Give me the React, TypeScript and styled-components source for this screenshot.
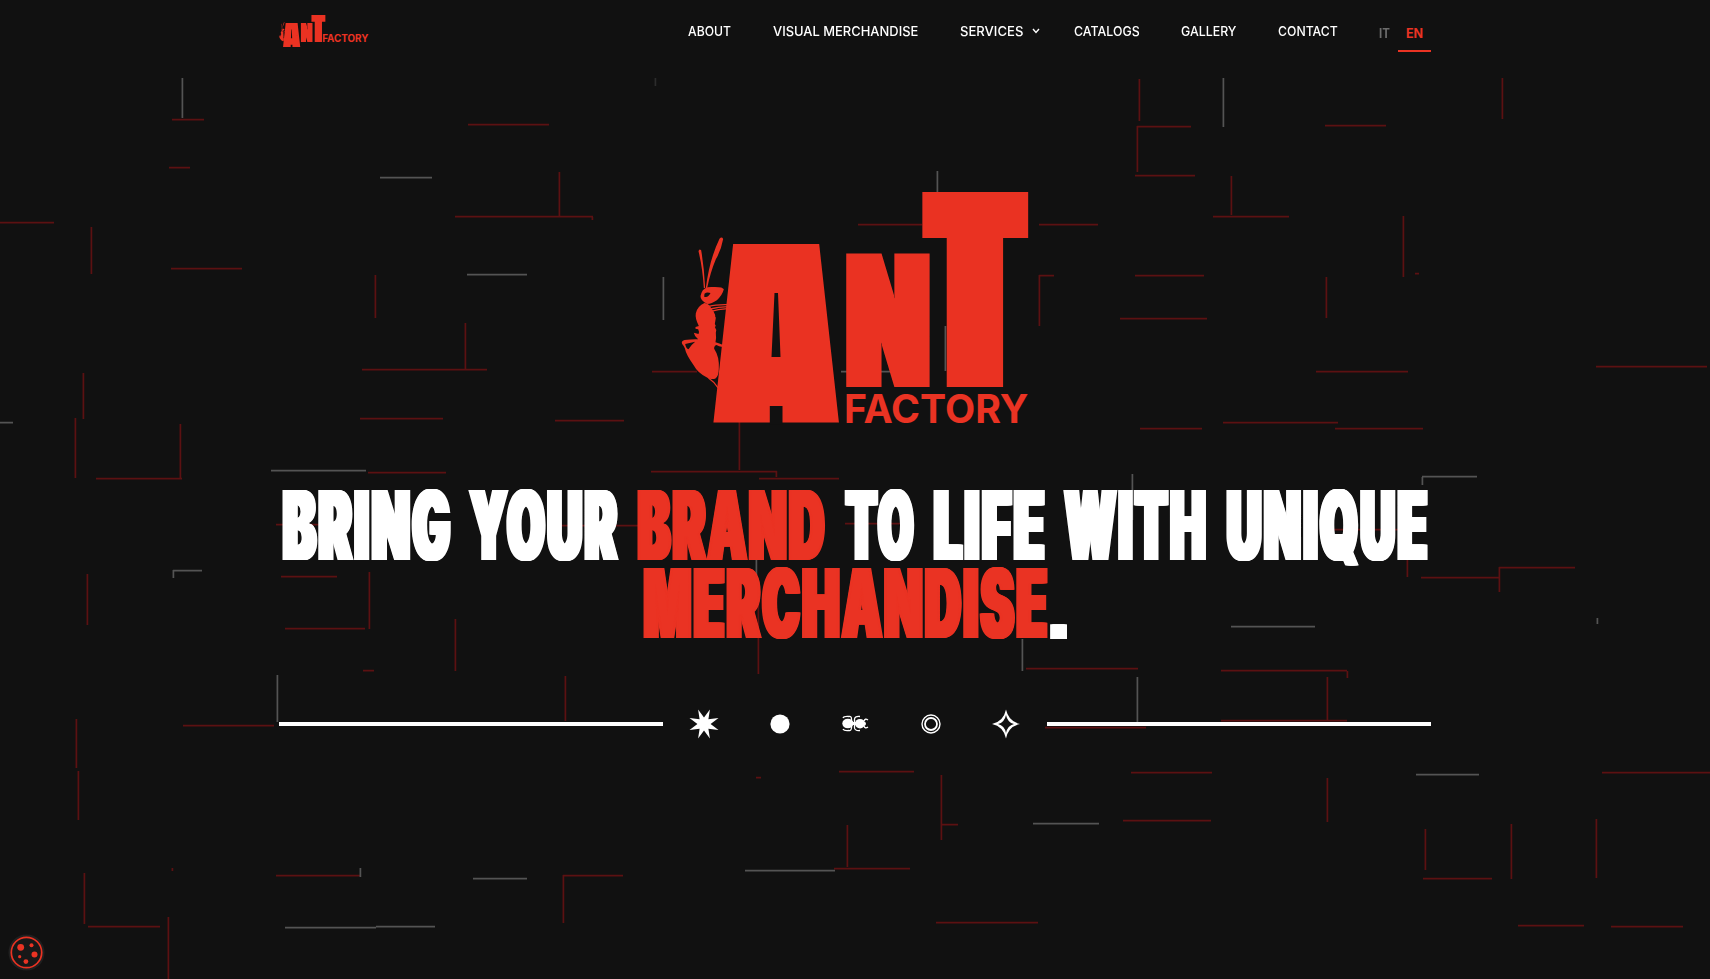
import React, { useLayoutEffect, useRef, useState } from "react";
import styled, { createGlobalStyle } from "styled-components";

const RED = "#ea3323";
const BG = "#111111";

const GlobalStyle = createGlobalStyle`
  *, *::before, *::after { box-sizing: border-box; }
  body { margin: 0; background: ${BG}; color: #fff; overflow: hidden; font-family: Inter, "Liberation Sans", sans-serif; }
  a { color: inherit; text-decoration: none; }
`;

const Page = styled.div`
  position: relative;
  height: 979px;
  overflow: hidden;
  background: ${BG};
`;

const Backdrop = styled.svg`
  position: absolute;
  inset: 0;
  width: 1710px;
  height: 979px;
`;

const Header = styled.header`
  position: relative;
  display: flex;
  justify-content: space-between;
  align-items: flex-start;
  width: 1152px;
  height: 78px;
  margin: 0 auto;
`;

const HomeLink = styled.a`
  display: block;
  padding-top: 16px;
  line-height: 0;
`;

const Nav = styled.nav`
  display: flex;
  align-items: flex-start;
  padding-top: 21px;
  font-size: 13.6px;
  font-weight: 500;
  line-height: 20px;
`;

const NavLink = styled.a<{ $gap: number }>`
  display: flex;
  align-items: center;
  margin-right: ${(p) => p.$gap}px;
`;

const Chevron = styled.svg`
  width: 8px;
  height: 6px;
  margin-left: 9px;
`;

const Languages = styled.div`
  display: flex;
  padding-top: 3px;
  font-size: 12.5px;
  font-weight: 700;
`;

const Language = styled.a<{ $active?: boolean }>`
  padding: 0 8px;
  height: 28px;
  color: ${(p) => (p.$active ? RED : "#6c6c6c")};
  border-bottom: 2px solid ${(p) => (p.$active ? RED : "transparent")};
`;

const FitBox = styled.span<{ $width: number }>`
  display: block;
  width: ${(p) => p.$width}px;
  white-space: nowrap;
`;

const FitText = styled.span`
  display: inline-block;
  transform-origin: 0 50%;
`;

const Hero = styled.main`
  position: relative;
  display: flex;
  flex-direction: column;
  align-items: center;
  width: 1152px;
  margin: 0 auto;
  padding-top: 114px;
`;

const HeroMark = styled.svg`
  display: block;
  width: 346px;
  height: 231px;
  overflow: visible;
`;

const SmallMark = styled.svg`
  width: 89px;
  height: 31px;
  overflow: visible;
`;

const Letter = styled.text`
  font-family: Roboto, "Liberation Sans", sans-serif;
  font-weight: 900;
  font-stretch: 75%;
  text-anchor: middle;
`;

const Wordmark = styled.text`
  font-family: Inter, "Liberation Sans", sans-serif;
  font-weight: 740;
`;

const Headline = styled.h1`
  margin: 62.5px 0 0 2px;
  font: 900 96px/78.7px Inter, "Liberation Sans", sans-serif;
  letter-spacing: 6px;
`;

const HeadlineRow = styled.span`
  display: flex;
  justify-content: center;
  height: 78.7px;
`;

const Word = styled.span<{ $accent?: boolean; $gap?: number }>`
  margin-left: ${(p) => p.$gap ?? 0}px;
  color: ${(p) => (p.$accent ? RED : "#fff")};
  text-shadow: 1.5px 0 0, -1.5px 0 0, 3px 0 0, -3px 0 0, 4.2px 0 0, -4.2px 0 0, 5.4px 0 0, -5.4px 0 0;
`;

const FullStop = styled.span`
  width: 18px;
  text-indent: -5px;
  font: 700 98px/82px "Liberation Sans", sans-serif;
  letter-spacing: 0;
  white-space: nowrap;
  text-shadow: 1.5px 0 0, -1.5px 0 0;
`;

const Divider = styled.div`
  display: flex;
  align-items: center;
  width: 1152px;
  height: 32px;
  margin-top: 65px;
`;

const Rule = styled.span`
  width: 384px;
  height: 4px;
  background: #fff;
`;

const Icons = styled.div`
  display: flex;
  flex: 1;
  justify-content: space-between;
  padding: 0 25px;
`;

const Icon = styled.svg`
  width: 32px;
  height: 32px;
`;

const CookieButton = styled.button`
  position: absolute;
  left: 8px;
  bottom: 8px;
  width: 37px;
  height: 37px;
  padding: 0;
  border: 0;
  background: none;
`;

function Fit({ width, children }: { width: number; children: React.ReactNode }) {
  const ref = useRef<HTMLSpanElement>(null);
  const [scale, setScale] = useState(1);
  useLayoutEffect(() => {
    if (ref.current) setScale(width / ref.current.offsetWidth);
  }, [width]);
  return (
    <FitBox $width={width}>
      <FitText ref={ref} style={{ transform: `scaleX(${scale})` }}>{children}</FitText>
    </FitBox>
  );
}

// Horizontal traces: x1, x2, y
const redH = [
  [172, 204, 119], [169, 190, 167], [468, 549, 124], [455, 593, 216], [0, 54, 222], [171, 242, 268],
  [362, 487, 369], [96, 182, 478], [360, 443, 418], [555, 624, 420], [368, 446, 472], [858, 922, 224],
  [1039, 1098, 224], [1039, 1054, 275], [652, 697, 371], [651, 777, 471], [759, 839, 478], [1137, 1191, 126],
  [1135, 1195, 175], [1135, 1204, 275], [1120, 1207, 318], [1325, 1386, 125], [1213, 1289, 216],
  [1415, 1419, 273], [1316, 1408, 371], [1596, 1707, 366], [1223, 1338, 422], [1335, 1423, 428],
  [1140, 1202, 428], [276, 320, 524], [560, 638, 525], [845, 900, 523], [1333, 1400, 529], [281, 337, 576],
  [1421, 1499, 577], [1499, 1575, 567], [285, 365, 628], [363, 374, 670], [183, 274, 725], [839, 914, 771],
  [834, 910, 868], [276, 360, 875], [563, 623, 875], [88, 160, 926], [756, 761, 777], [1026, 1138, 668],
  [1221, 1347, 670], [1221, 1347, 720], [1045, 1146, 727], [1131, 1212, 772], [1602, 1710, 772],
  [941, 958, 824], [1123, 1211, 820], [1423, 1492, 878], [936, 1038, 922], [1518, 1584, 925], [1611, 1683, 926],
];
const grayH = [
  [380, 432, 177], [467, 527, 274], [0, 13, 422], [271, 366, 470], [841, 892, 371], [1422, 1477, 476],
  [173, 202, 570], [473, 527, 878], [745, 835, 870], [285, 376, 927], [376, 435, 926], [1231, 1315, 626],
  [1416, 1479, 774], [1033, 1099, 823],
];
// Vertical traces: x, y1, y2
const redV = [
  [559, 172, 216], [592, 217, 220], [91, 227, 274], [375, 275, 318], [465, 323, 369], [83, 373, 419],
  [75, 418, 478], [180, 424, 478], [1039, 275, 326], [739, 422, 470], [776, 471, 477], [1139, 79, 121],
  [1137, 126, 172], [1502, 78, 119], [1231, 176, 215], [1403, 216, 277], [1326, 277, 318], [758, 600, 674],
  [1407, 555, 577], [369, 572, 629], [87, 574, 625], [455, 619, 671], [565, 676, 721], [76, 719, 768],
  [78, 771, 820], [847, 825, 867], [563, 875, 923], [84, 873, 924], [168, 917, 979], [1499, 567, 592],
  [1347, 671, 678], [1327, 677, 720], [941, 775, 840], [1327, 778, 822], [1425, 829, 870],
  [1511, 824, 879], [1596, 819, 878], [172, 868, 871],
];
const grayV = [
  [182, 78, 118], [937, 171, 195], [663, 277, 320], [945, 326, 371], [1132, 474, 520],
  [1223, 78, 127], [1422, 477, 485], [756, 530, 575], [173, 570, 578], [277, 675, 722], [360, 868, 877],
  [1022, 639, 671], [1137, 677, 722], [1597, 618, 624],
];

const hPath = (rows: number[][]) => rows.map(([a, b, y]) => `M${a} ${y + 0.6}H${b}`).join("");
const vPath = (rows: number[][]) => rows.map(([x, a, b]) => `M${x + 0.4} ${a}V${b}`).join("");

function Traces() {
  return (
    <Backdrop viewBox="0 0 1710 979" fill="none" strokeWidth="1.7">
      <path d={hPath(redH) + vPath(redV)} stroke="#5c1112" />
      <path d={hPath(grayH) + vPath(grayV)} stroke="#545454" />
      <path d="M655.4 78V86" stroke="#2c2c2c" />
    </Backdrop>
  );
}

function Ant() {
  return (
    <g transform="translate(670 180) scale(0.33333)" fill={RED} fillRule="evenodd">
      <path d="M103 324Q99 262 87 214Q89 205 95 211Q104 262 107 324ZM109 324Q120 238 150 176Q157 169 161 177Q155 210 139 238Q123 276 113 324Z" />
      <path d="M96 338Q102 321 125 321Q160 319 163 328Q159 345 142 361Q126 372 114 372Q92 362 93 348ZM104 350Q115 355 123 339Q112 335 105 341Z" />
      <path d="M105 369Q120 371 125 385Q134 394 137 405Q136 410 139 413L136 432L139 438L136 441Q142 448 139 458Q141 475 138 487Q150 490 161 495L159 501Q148 500 141 495Q133 498 134 506Q150 530 148 565Q148 590 137 596Q122 599 115 594Q85 580 72 555Q50 525 46 505Q45 500 38 492Q34 483 45 480Q70 477 86 478Q75 470 73 458L87 462Q90 455 86 448L78 446V441L88 438Q76 415 79 400Q84 378 105 369ZM47 492L77 485Q63 496 57 508Q50 507 47 492Z" />
      <path d="M118 379Q140 373 176 374M122 387Q145 381 176 380M124 394Q145 388 174 386M117 594Q135 606 146 624" fill="none" stroke={RED} strokeWidth="4" />
    </g>
  );
}

function Mark({ id }: { id: string }) {
  return (
    <>
      <defs>
        <filter id={`${id}-a`} filterUnits="userSpaceOnUse" x="680" y="180" width="360" height="260">
          <feMorphology operator="dilate" radius="36 0" />
        </filter>
        <filter id={`${id}-n`} filterUnits="userSpaceOnUse" x="680" y="180" width="360" height="260">
          <feMorphology operator="dilate" radius="6 0" />
        </filter>
        <filter id={`${id}-t`} filterUnits="userSpaceOnUse" x="680" y="180" width="360" height="260">
          <feMorphology operator="dilate" radius="16 6" />
        </filter>
      </defs>
      <Ant />
      <g fill={RED}>
        <g filter={`url(#${id}-a)`}>
          <Letter transform="translate(776.8 422.2) scale(0.358 1)" fontSize="251">A</Letter>
        </g>
        <g filter={`url(#${id}-n)`}>
          <Letter transform="translate(888.5 386.8) scale(0.748 1)" fontSize="186.5">N</Letter>
        </g>
        <g filter={`url(#${id}-t)`}>
          <Letter transform="translate(975.8 381) scale(0.565 1)" fontSize="257.5">T</Letter>
        </g>
      </g>
      <path d="M775 293H778.5L781 357H772ZM770.3 406H783V424.5H770.3Z" fill={BG} />
    </>
  );
}

export default function App() {
  return (
    <Page>
      <GlobalStyle />
      <Traces />
      <Header>
        <HomeLink href="#">
          <SmallMark viewBox="683 192 660 231" preserveAspectRatio="xMinYMin meet">
            <Mark id="small" />
            <Wordmark x="1005" y="386" fontSize="76" fill={RED} textLength="344" lengthAdjust="spacingAndGlyphs">FACTORY</Wordmark>
          </SmallMark>
        </HomeLink>
        <Nav>
          <NavLink href="#" $gap={42}><Fit width={43}>ABOUT</Fit></NavLink>
          <NavLink href="#" $gap={41.5}><Fit width={145.5}>VISUAL MERCHANDISE</Fit></NavLink>
          <NavLink href="#" $gap={34}>
            <Fit width={63.5}>SERVICES</Fit>
            <Chevron viewBox="0 0 8 6" fill="none" stroke="#fff" strokeWidth="1.4"><path d="M1 1L4 4.4L7 1" /></Chevron>
          </NavLink>
          <NavLink href="#" $gap={41.5}><Fit width={65.5}>CATALOGS</Fit></NavLink>
          <NavLink href="#" $gap={41}><Fit width={55.5}>GALLERY</Fit></NavLink>
          <NavLink href="#" $gap={34}><Fit width={59.5}>CONTACT</Fit></NavLink>
          <Languages>
            <Language href="#"><Fit width={11}>IT</Fit></Language>
            <Language href="#" $active><Fit width={17}>EN</Fit></Language>
          </Languages>
        </Nav>
      </Header>
      <Hero>
        <HeroMark viewBox="682.5 192 346 231">
          <Mark id="hero" />
          <Wordmark x="844.5" y="422.5" fontSize="39.5" fill={RED} textLength="184.5" lengthAdjust="spacingAndGlyphs">FACTORY</Wordmark>
        </HeroMark>
        <Headline>
          <HeadlineRow>
            <Word><Fit width={169.5}>BRING</Fit></Word>
            <Word $gap={18}><Fit width={149.5}>YOUR</Fit></Word>
            <Word $gap={18.5} $accent><Fit width={189}>BRAND</Fit></Word>
            <Word $gap={19}><Fit width={70}>TO</Fit></Word>
            <Word $gap={18}><Fit width={113}>LIFE</Fit></Word>
            <Word $gap={18}><Fit width={143.5}>WITH</Fit></Word>
            <Word $gap={18}><Fit width={203}>UNIQUE</Fit></Word>
          </HeadlineRow>
          <HeadlineRow>
            <Word $accent><Fit width={406}>MERCHANDISE</Fit></Word>
            <FullStop>.</FullStop>
          </HeadlineRow>
        </Headline>
        <Divider>
          <Rule />
          <Icons>
            <Icon viewBox="-16 -16 32 32" fill="#fff">
              <path d="M5.9 -14.5L4.4 -4.8L14.5 -5.9L6.6 0L14.5 5.9L4.4 4.8L5.9 14.5L0 6.6L-5.9 14.5L-4.4 4.8L-14.5 5.9L-6.6 0L-14.5 -5.9L-4.4 -4.8L-5.9 -14.5L0 -6.6Z" />
            </Icon>
            <Icon viewBox="-16 -16 32 32" fill="#fff"><circle r="9.6" /></Icon>
            <Icon viewBox="-16 -16 32 32" fill="#fff">
              <ellipse cx="-7.2" cy="-.5" rx="5.5" ry="4.8" />
              <ellipse cx="5" cy="-.3" rx="5" ry="4.8" />
              <rect x="-3" y="-2" width="6" height="3" />
              <circle cx="9" cy="-.3" r="2" />
              <path d="M-12 -6Q-11 -8 -6 -7.5Q-3.5 -8 -3.5 -5Q-4 -3 -1.5 -1Q-4 1 -3.5 4Q-4 7 -6 6.5Q-11 7 -12 5M5 -7.5Q0 -8 -.5 -5V4Q0 7 5 6.5M9 -3Q10 -6 13 -4M9 2Q10 5 13 3" fill="none" stroke="#fff" strokeWidth="1.3" />
            </Icon>
            <Icon viewBox="-16 -16 32 32" fill="none" stroke="#fff"><circle r="9" strokeWidth="1.4" /><circle r="6" strokeWidth="1.8" /></Icon>
            <Icon viewBox="-16 -16 32 32" fill="#fff">
              <path fillRule="evenodd" d="M0 -14.5Q2.5 -2.5 14 0Q2.5 2.5 0 14.5Q-2.5 2.5 -14 0Q-2.5 -2.5 0 -14.5ZM0 -9Q-1.5 -1.5 -8 0Q-1.5 1.5 0 9Q1.5 1.5 8 0Q1.5 -1.5 0 -9Z" />
            </Icon>
          </Icons>
          <Rule />
        </Divider>
      </Hero>
      <CookieButton aria-label="Cookie settings">
        <svg width="37" height="37" viewBox="7.5 934 37 37" fill={RED}>
          <circle cx="26" cy="952.5" r="18" fill="#202020" />
          <circle cx="26" cy="952.5" r="15.2" fill="#181818" stroke={RED} strokeWidth="1.7" />
          <circle cx="20.2" cy="947.3" r="3.4" />
          <circle cx="31" cy="945.3" r="2" />
          <circle cx="34" cy="954.5" r="3" />
          <circle cx="19.2" cy="956.7" r="1.6" />
          <circle cx="25.4" cy="961.6" r="2.4" />
        </svg>
      </CookieButton>
    </Page>
  );
}
